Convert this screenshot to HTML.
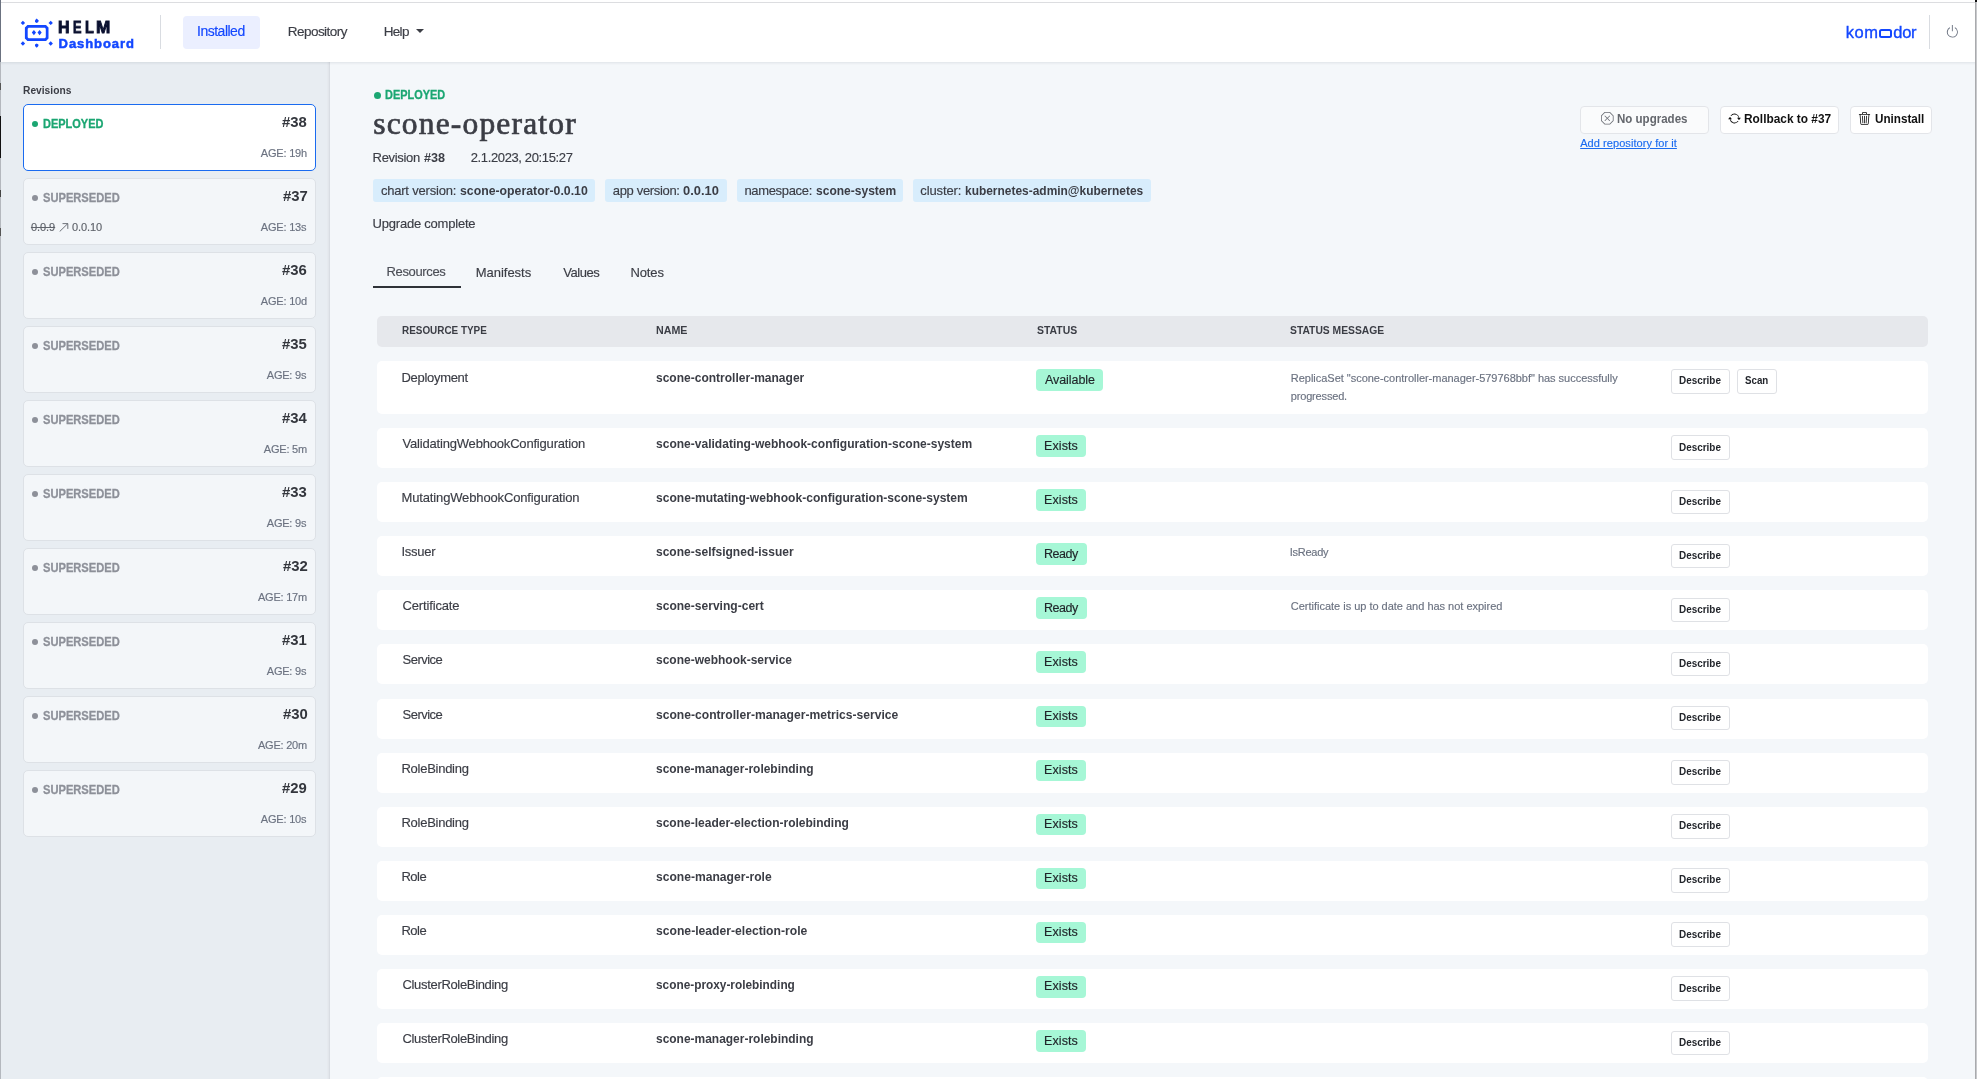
<!DOCTYPE html><html><head><meta charset="utf-8"><title>Helm Dashboard</title><style>*{box-sizing:border-box;margin:0;padding:0}
html,body{width:1977px;height:1079px;overflow:hidden}
body{font-family:"Liberation Sans",sans-serif;background:#f4f7fa;color:#3b3d45;position:relative}
.a{position:absolute}
.t{position:absolute;line-height:1;white-space:nowrap}
#root{position:absolute;left:0;top:0;width:1977px;height:1079px;will-change:transform}
.t{-webkit-text-stroke:0.15px currentColor}
</style></head><body><div id="root">
<div class="a" style="left:1px;top:62px;width:329px;height:1017px;background:#e8edf2"></div>
<div class="a" style="left:327px;top:62px;width:1px;height:1017px;background:#e6eaef"></div>
<div class="a" style="left:328px;top:62px;width:1px;height:1017px;background:#e2e6eb"></div>
<div class="a" style="left:329px;top:62px;width:1px;height:1017px;background:#d9dde3"></div>
<div class="a" style="left:0;top:0;width:1977px;height:62px;background:#fff;box-shadow:0 1px 2.5px rgba(30,40,60,0.10)"></div>
<div class="a" style="left:1px;top:2px;width:1976px;height:1px;background:#dcdde0"></div>
<svg class="a" style="left:18px;top:17px" width="36" height="32" viewBox="0 0 36 32">
<g fill="#1347ff">
<path d="M9.4 8.1 h18.6 l2.5 2.5 v10.8 l-2.5 2.5 h-18.6 l-2.5 -2.5 v-10.8 z M10.6 10.8 l-0.9 0.9 v8.6 l0.9 0.9 h16.3 l0.9 -0.9 v-8.6 l-0.9 -0.9 z" fill-rule="evenodd"/>
<path d="M15.9 12.9 l2.1 2.7 -2.1 2.7 -2.1 -2.7z"/>
<path d="M21.6 12.9 l2.1 2.7 -2.1 2.7 -2.1 -2.7z"/>
<path d="M18.7 1.6 l1.7 1.7 v1.6 l-1.7 1.1 -1.7 -1.1 v-1.6z"/>
<path d="M18.7 30.8 l1.7 -1.7 v-1.6 l-1.7 -1.1 -1.7 1.1 v1.6z"/>
<path d="M4.9 3.7 l2.2 2.2 -2.2 2.2 -2.2 -2.2z"/>
<path d="M32.7 3.7 l2.2 2.2 -2.2 2.2 -2.2 -2.2z"/>
<path d="M4.9 24.3 l2.2 2.2 -2.2 2.2 -2.2 -2.2z"/>
<path d="M32.7 24.3 l2.2 2.2 -2.2 2.2 -2.2 -2.2z"/>
</g></svg>
<div class="t" style="left:57.96px;top:19px;font-size:17px;color:#0b1130;font-weight:bold;transform:scaleX(0.9364);transform-origin:0 0;-webkit-text-stroke:0.9px #0b1130">H</div>
<div class="t" style="left:72.75px;top:19px;font-size:17px;color:#0b1130;font-weight:bold;transform:scaleX(0.7500);transform-origin:0 0;-webkit-text-stroke:0.9px #0b1130">E</div>
<div class="t" style="left:84.76px;top:19px;font-size:17px;color:#0b1130;font-weight:bold;transform:scaleX(0.8444);transform-origin:0 0;-webkit-text-stroke:0.9px #0b1130">L</div>
<div class="t" style="left:95.89px;top:19px;font-size:17px;color:#0b1130;font-weight:bold;transform:scaleX(1.0077);transform-origin:0 0;-webkit-text-stroke:0.9px #0b1130">M</div>
<div class="t" style="left:58.60px;top:37px;font-size:13px;color:#1347ff;font-weight:bold;letter-spacing:0.930px;-webkit-text-stroke:0.5px #1347ff">Dashboard</div>
<div class="a" style="left:160px;top:15px;width:1px;height:34px;background:#d9dce1"></div>
<div class="a" style="left:183px;top:16px;width:77px;height:33px;background:#ebefff;border-radius:4px"></div>
<div class="t" style="left:197.00px;top:24px;font-size:14px;color:#1347ff;letter-spacing:-0.495px">Installed</div>
<div class="t" style="left:287.70px;top:25px;font-size:13.5px;color:#3b3d45;letter-spacing:-0.520px">Repository</div>
<div class="t" style="left:383.80px;top:25px;font-size:13.5px;color:#3b3d45;letter-spacing:-0.719px">Help</div>
<svg class="a" style="left:416px;top:29px" width="8" height="4" viewBox="0 0 8 4"><path d="M0 0h8L4 4z" fill="#3b3d45"/></svg>
<div class="t" style="left:1845.80px;top:24px;font-size:16.5px;color:#1347ff;letter-spacing:0.487px;-webkit-text-stroke:0.35px #1347ff">kom</div>
<div class="a" style="left:1879.3px;top:29.3px;width:12.6px;height:9.1px;border:2px solid #1347ff;border-radius:2.5px"></div>
<div class="t" style="left:1893.30px;top:24px;font-size:16.5px;color:#1347ff;letter-spacing:-0.277px;-webkit-text-stroke:0.35px #1347ff">dor</div>
<div class="a" style="left:1929px;top:15px;width:1px;height:34px;background:#d9dce1"></div>
<svg class="a" style="left:1945.2px;top:24px" width="14.7" height="14.7" viewBox="0 0 16 16" fill="#6b7280"><path d="M7.5 1v7h1V1h-1z"/><path d="M3 8.812a4.999 4.999 0 0 1 2.578-4.375l-.485-.874A6 6 0 1 0 11 3.616l-.501.865A5 5 0 1 1 3 8.812z"/></svg>
<div class="t" style="left:22.80px;top:85px;font-size:11px;color:#3b3d45;font-weight:bold;-webkit-text-stroke-width:0;transform:scaleX(0.9300);transform-origin:0 0">Revisions</div>
<div class="a" style="left:23px;top:104px;width:293px;height:67px;background:#fff;border:1.5px solid #1a6bf0;border-radius:5px"></div>
<div class="a" style="left:32px;top:120.5px;width:6.4px;height:6.4px;border-radius:50%;background:#1ba672"></div>
<div class="t" style="left:42.80px;top:118px;font-size:12px;color:#1ba672;font-weight:bold;transform:scaleX(0.9149);transform-origin:0 0;-webkit-text-stroke:0.3px #1ba672">DEPLOYED</div>
<div class="t" style="left:281.81px;top:114px;font-size:15.5px;color:#33363d;font-weight:bold;-webkit-text-stroke-width:0;transform:scaleX(0.9600);transform-origin:0 0">#38</div>
<div class="t" style="left:260.85px;top:148px;font-size:11px;color:#6b7280;letter-spacing:-0.204px">AGE: 19h</div>
<div class="a" style="left:23px;top:178px;width:293px;height:67px;background:#f3f6f9;border:1px solid #dde1e6;border-radius:5px"></div>
<div class="a" style="left:32px;top:194.5px;width:6.4px;height:6.4px;border-radius:50%;background:#8d9099"></div>
<div class="t" style="left:42.80px;top:192px;font-size:12px;color:#8d9099;font-weight:bold;transform:scaleX(0.9275);transform-origin:0 0;-webkit-text-stroke:0.3px #8d9099">SUPERSEDED</div>
<div class="t" style="left:282.77px;top:188px;font-size:15.5px;color:#33363d;font-weight:bold;-webkit-text-stroke-width:0;transform:scaleX(0.9600);transform-origin:0 0">#37</div>
<div class="t" style="left:260.85px;top:222px;font-size:11px;color:#6b7280;letter-spacing:-0.204px">AGE: 13s</div>
<div class="t" style="left:30.90px;top:222px;font-size:11px;color:#5f636b;letter-spacing:-0.037px;text-decoration:line-through">0.0.9</div>
<svg class="a" style="left:58.5px;top:223px" width="10" height="9" viewBox="0 0 10 9"><path d="M0.7 8.5L8.8 0.6M3.5 0.6h5.3v5.3" fill="none" stroke="#5f636b" stroke-width="0.9"/></svg>
<div class="t" style="left:71.90px;top:222px;font-size:11px;color:#5f636b;letter-spacing:-0.073px">0.0.10</div>
<div class="a" style="left:23px;top:252px;width:293px;height:67px;background:#f3f6f9;border:1px solid #dde1e6;border-radius:5px"></div>
<div class="a" style="left:32px;top:268.5px;width:6.4px;height:6.4px;border-radius:50%;background:#8d9099"></div>
<div class="t" style="left:42.80px;top:266px;font-size:12px;color:#8d9099;font-weight:bold;transform:scaleX(0.9275);transform-origin:0 0;-webkit-text-stroke:0.3px #8d9099">SUPERSEDED</div>
<div class="t" style="left:281.81px;top:262px;font-size:15.5px;color:#33363d;font-weight:bold;-webkit-text-stroke-width:0;transform:scaleX(0.9600);transform-origin:0 0">#36</div>
<div class="t" style="left:260.85px;top:296px;font-size:11px;color:#6b7280;letter-spacing:-0.204px">AGE: 10d</div>
<div class="a" style="left:23px;top:326px;width:293px;height:67px;background:#f3f6f9;border:1px solid #dde1e6;border-radius:5px"></div>
<div class="a" style="left:32px;top:342.5px;width:6.4px;height:6.4px;border-radius:50%;background:#8d9099"></div>
<div class="t" style="left:42.80px;top:340px;font-size:12px;color:#8d9099;font-weight:bold;transform:scaleX(0.9275);transform-origin:0 0;-webkit-text-stroke:0.3px #8d9099">SUPERSEDED</div>
<div class="t" style="left:281.81px;top:336px;font-size:15.5px;color:#33363d;font-weight:bold;-webkit-text-stroke-width:0;transform:scaleX(0.9600);transform-origin:0 0">#35</div>
<div class="t" style="left:266.78px;top:370px;font-size:11px;color:#6b7280;letter-spacing:-0.207px">AGE: 9s</div>
<div class="a" style="left:23px;top:400px;width:293px;height:67px;background:#f3f6f9;border:1px solid #dde1e6;border-radius:5px"></div>
<div class="a" style="left:32px;top:416.5px;width:6.4px;height:6.4px;border-radius:50%;background:#8d9099"></div>
<div class="t" style="left:42.80px;top:414px;font-size:12px;color:#8d9099;font-weight:bold;transform:scaleX(0.9275);transform-origin:0 0;-webkit-text-stroke:0.3px #8d9099">SUPERSEDED</div>
<div class="t" style="left:281.81px;top:410px;font-size:15.5px;color:#33363d;font-weight:bold;-webkit-text-stroke-width:0;transform:scaleX(0.9600);transform-origin:0 0">#34</div>
<div class="t" style="left:263.87px;top:444px;font-size:11px;color:#6b7280;letter-spacing:-0.222px">AGE: 5m</div>
<div class="a" style="left:23px;top:474px;width:293px;height:67px;background:#f3f6f9;border:1px solid #dde1e6;border-radius:5px"></div>
<div class="a" style="left:32px;top:490.5px;width:6.4px;height:6.4px;border-radius:50%;background:#8d9099"></div>
<div class="t" style="left:42.80px;top:488px;font-size:12px;color:#8d9099;font-weight:bold;transform:scaleX(0.9275);transform-origin:0 0;-webkit-text-stroke:0.3px #8d9099">SUPERSEDED</div>
<div class="t" style="left:281.81px;top:484px;font-size:15.5px;color:#33363d;font-weight:bold;-webkit-text-stroke-width:0;transform:scaleX(0.9600);transform-origin:0 0">#33</div>
<div class="t" style="left:266.78px;top:518px;font-size:11px;color:#6b7280;letter-spacing:-0.207px">AGE: 9s</div>
<div class="a" style="left:23px;top:548px;width:293px;height:67px;background:#f3f6f9;border:1px solid #dde1e6;border-radius:5px"></div>
<div class="a" style="left:32px;top:564.5px;width:6.4px;height:6.4px;border-radius:50%;background:#8d9099"></div>
<div class="t" style="left:42.80px;top:562px;font-size:12px;color:#8d9099;font-weight:bold;transform:scaleX(0.9275);transform-origin:0 0;-webkit-text-stroke:0.3px #8d9099">SUPERSEDED</div>
<div class="t" style="left:282.77px;top:558px;font-size:15.5px;color:#33363d;font-weight:bold;-webkit-text-stroke-width:0;transform:scaleX(0.9600);transform-origin:0 0">#32</div>
<div class="t" style="left:257.94px;top:592px;font-size:11px;color:#6b7280;letter-spacing:-0.217px">AGE: 17m</div>
<div class="a" style="left:23px;top:622px;width:293px;height:67px;background:#f3f6f9;border:1px solid #dde1e6;border-radius:5px"></div>
<div class="a" style="left:32px;top:638.5px;width:6.4px;height:6.4px;border-radius:50%;background:#8d9099"></div>
<div class="t" style="left:42.80px;top:636px;font-size:12px;color:#8d9099;font-weight:bold;transform:scaleX(0.9275);transform-origin:0 0;-webkit-text-stroke:0.3px #8d9099">SUPERSEDED</div>
<div class="t" style="left:281.81px;top:632px;font-size:15.5px;color:#33363d;font-weight:bold;-webkit-text-stroke-width:0;transform:scaleX(0.9600);transform-origin:0 0">#31</div>
<div class="t" style="left:266.78px;top:666px;font-size:11px;color:#6b7280;letter-spacing:-0.207px">AGE: 9s</div>
<div class="a" style="left:23px;top:696px;width:293px;height:67px;background:#f3f6f9;border:1px solid #dde1e6;border-radius:5px"></div>
<div class="a" style="left:32px;top:712.5px;width:6.4px;height:6.4px;border-radius:50%;background:#8d9099"></div>
<div class="t" style="left:42.80px;top:710px;font-size:12px;color:#8d9099;font-weight:bold;transform:scaleX(0.9275);transform-origin:0 0;-webkit-text-stroke:0.3px #8d9099">SUPERSEDED</div>
<div class="t" style="left:282.77px;top:706px;font-size:15.5px;color:#33363d;font-weight:bold;-webkit-text-stroke-width:0;transform:scaleX(0.9600);transform-origin:0 0">#30</div>
<div class="t" style="left:257.94px;top:740px;font-size:11px;color:#6b7280;letter-spacing:-0.217px">AGE: 20m</div>
<div class="a" style="left:23px;top:770px;width:293px;height:67px;background:#f3f6f9;border:1px solid #dde1e6;border-radius:5px"></div>
<div class="a" style="left:32px;top:786.5px;width:6.4px;height:6.4px;border-radius:50%;background:#8d9099"></div>
<div class="t" style="left:42.80px;top:784px;font-size:12px;color:#8d9099;font-weight:bold;transform:scaleX(0.9275);transform-origin:0 0;-webkit-text-stroke:0.3px #8d9099">SUPERSEDED</div>
<div class="t" style="left:281.81px;top:780px;font-size:15.5px;color:#33363d;font-weight:bold;-webkit-text-stroke-width:0;transform:scaleX(0.9600);transform-origin:0 0">#29</div>
<div class="t" style="left:260.85px;top:814px;font-size:11px;color:#6b7280;letter-spacing:-0.204px">AGE: 10s</div>
<div class="a" style="left:374.2px;top:91.5px;width:7px;height:7px;border-radius:50%;background:#1ba672"></div>
<div class="t" style="left:385.40px;top:89px;font-size:12px;color:#1ba672;font-weight:bold;transform:scaleX(0.9104);transform-origin:0 0;-webkit-text-stroke:0.3px #1ba672">DEPLOYED</div>
<div class="t" style="left:373.20px;top:108px;font-size:31.5px;color:#3b3d45;font-family:'Liberation Serif',serif;letter-spacing:1.180px;-webkit-text-stroke:0.7px #3b3d45">scone-operator</div>
<div class="t" style="left:372.60px;top:151px;font-size:13px;color:#3b3d45;letter-spacing:-0.318px">Revision</div>
<div class="t" style="left:424.20px;top:151px;font-size:13px;color:#3b3d45;font-weight:bold;-webkit-text-stroke-width:0;transform:scaleX(0.9692);transform-origin:0 0">#38</div>
<div class="t" style="left:470.70px;top:151px;font-size:13px;color:#3b3d45;letter-spacing:-0.365px">2.1.2023, 20:15:27</div>
<div class="a" style="left:373px;top:179px;width:222.0px;height:23px;background:#d8edfc;border-radius:3px"></div>
<div class="t" style="left:380.90px;top:184px;font-size:13px;color:#3b3d45;letter-spacing:-0.202px">chart version:</div>
<div class="t" style="left:459.60px;top:184px;font-size:13px;color:#3b3d45;font-weight:bold;-webkit-text-stroke-width:0;transform:scaleX(0.9453);transform-origin:0 0">scone-operator-0.0.10</div>
<div class="a" style="left:605.2px;top:179px;width:121.5px;height:23px;background:#d8edfc;border-radius:3px"></div>
<div class="t" style="left:612.80px;top:184px;font-size:13px;color:#3b3d45;letter-spacing:-0.337px">app version:</div>
<div class="t" style="left:683.20px;top:184px;font-size:13px;color:#3b3d45;font-weight:bold;-webkit-text-stroke-width:0;transform:scaleX(0.9913);transform-origin:0 0">0.0.10</div>
<div class="a" style="left:737.1px;top:179px;width:165.7px;height:23px;background:#d8edfc;border-radius:3px"></div>
<div class="t" style="left:744.40px;top:184px;font-size:13px;color:#3b3d45;letter-spacing:-0.323px">namespace:</div>
<div class="t" style="left:815.60px;top:184px;font-size:13px;color:#3b3d45;font-weight:bold;-webkit-text-stroke-width:0;transform:scaleX(0.9251);transform-origin:0 0">scone-system</div>
<div class="a" style="left:913px;top:179px;width:237.9px;height:23px;background:#d8edfc;border-radius:3px"></div>
<div class="t" style="left:920.30px;top:184px;font-size:13px;color:#3b3d45;letter-spacing:-0.113px">cluster:</div>
<div class="t" style="left:964.70px;top:184px;font-size:13px;color:#3b3d45;font-weight:bold;-webkit-text-stroke-width:0;transform:scaleX(0.9186);transform-origin:0 0">kubernetes-admin@kubernetes</div>
<div class="t" style="left:372.60px;top:217px;font-size:13px;color:#3b3d45;letter-spacing:-0.220px">Upgrade complete</div>
<div class="t" style="left:386.60px;top:265px;font-size:13px;color:#4b4e56;letter-spacing:-0.367px">Resources</div>
<div class="a" style="left:373px;top:286px;width:88px;height:2px;background:#2f3238"></div>
<div class="t" style="left:475.70px;top:266px;font-size:13px;color:#3b3d45;letter-spacing:-0.016px">Manifests</div>
<div class="t" style="left:563.20px;top:266px;font-size:13px;color:#3b3d45;letter-spacing:-0.437px">Values</div>
<div class="t" style="left:630.40px;top:266px;font-size:13px;color:#3b3d45;letter-spacing:-0.090px">Notes</div>
<div class="a" style="left:1580px;top:106px;width:129px;height:27.5px;background:#fafbfc;border:1px solid #e3e5e9;border-radius:4px"></div>
<svg class="a" style="left:1601.1px;top:112.3px" width="12.6" height="12.6" viewBox="0 0 16 16" fill="#6b6e75"><path d="M4.54.146A.5.5 0 0 1 4.893 0h6.214a.5.5 0 0 1 .353.146l4.394 4.394a.5.5 0 0 1 .146.353v6.214a.5.5 0 0 1-.146.353l-4.394 4.394a.5.5 0 0 1-.353.146H4.893a.5.5 0 0 1-.353-.146L.146 11.46A.5.5 0 0 1 0 11.107V4.893a.5.5 0 0 1 .146-.353L4.54.146zM5.1 1 1 5.1v5.8L5.1 15h5.8l4.1-4.1V5.1L10.9 1H5.1z"/><path d="M4.646 4.646a.5.5 0 0 1 .708 0L8 7.293l2.646-2.647a.5.5 0 0 1 .708.708L8.707 8l2.647 2.646a.5.5 0 0 1-.708.708L8 8.707l-2.646 2.647a.5.5 0 0 1-.708-.708L7.293 8 4.646 5.354a.5.5 0 0 1 0-.708z"/></svg>
<div class="t" style="left:1617.30px;top:113px;font-size:12px;color:#64676d;font-weight:bold;-webkit-text-stroke-width:0;transform:scaleX(0.9611);transform-origin:0 0">No upgrades</div>
<div class="t" style="left:1580.20px;top:138px;font-size:11px;color:#1a6bf0;letter-spacing:0.064px;text-decoration:underline">Add repository for it</div>
<div class="a" style="left:1720px;top:106px;width:119px;height:27.5px;background:#fff;border:1px solid #e3e5e9;border-radius:4px"></div>
<svg class="a" style="left:1727.5px;top:112.3px" width="13" height="13" viewBox="0 0 16 16" fill="#111"><path d="M11.534 7h3.932a.25.25 0 0 1 .192.41l-1.966 2.36a.25.25 0 0 1-.384 0l-1.966-2.36a.25.25 0 0 1 .192-.41zm-11 2h3.932a.25.25 0 0 0 .192-.41L2.692 6.23a.25.25 0 0 0-.384 0L.342 8.59A.25.25 0 0 0 .534 9z"/><path fill-rule="evenodd" d="M8 3c-1.552 0-2.94.707-3.857 1.818a.5.5 0 1 1-.771-.636A6.002 6.002 0 0 1 13.917 7H12.9A5.002 5.002 0 0 0 8 3zM3.1 9a5.002 5.002 0 0 0 8.757 2.182.5.5 0 1 1 .771.636A6.002 6.002 0 0 1 2.083 9H3.1z"/></svg>
<div class="t" style="left:1744.30px;top:113px;font-size:12.5px;color:#111;font-weight:bold;-webkit-text-stroke-width:0;transform:scaleX(0.9504);transform-origin:0 0">Rollback to #37</div>
<div class="a" style="left:1850px;top:106px;width:82px;height:27.5px;background:#fff;border:1px solid #e3e5e9;border-radius:4px"></div>
<svg class="a" style="left:1858px;top:112px" width="13" height="13" viewBox="0 0 16 16" fill="#111"><path d="M6.5 1h3a.5.5 0 0 1 .5.5v1H6v-1a.5.5 0 0 1 .5-.5ZM11 2.5v-1A1.5 1.5 0 0 0 9.5 0h-3A1.5 1.5 0 0 0 5 1.5v1H1.5a.5.5 0 0 0 0 1h.538l.853 10.66A2 2 0 0 0 4.885 16h6.23a2 2 0 0 0 1.994-1.84l.853-10.66h.538a.5.5 0 0 0 0-1H11Zm1.958 1-.846 10.58a1 1 0 0 1-.997.92h-6.23a1 1 0 0 1-.997-.92L3.042 3.5h9.916Zm-7.487 1a.5.5 0 0 1 .528.47l.5 8.5a.5.5 0 0 1-.998.06L5 5.03a.5.5 0 0 1 .47-.53Zm5.058 0a.5.5 0 0 1 .47.53l-.5 8.5a.5.5 0 1 1-.998-.06l.5-8.5a.5.5 0 0 1 .528-.47ZM8 4.5a.5.5 0 0 1 .5.5v8.5a.5.5 0 0 1-1 0V5a.5.5 0 0 1 .5-.5Z"/></svg>
<div class="t" style="left:1874.50px;top:113px;font-size:12.5px;color:#111;font-weight:bold;-webkit-text-stroke-width:0;transform:scaleX(0.9348);transform-origin:0 0">Uninstall</div>
<div class="a" style="left:377px;top:316px;width:1551px;height:31px;background:#e6e8ec;border-radius:5px"></div>
<div class="t" style="left:402.30px;top:325px;font-size:11px;color:#3b3d45;font-weight:bold;-webkit-text-stroke-width:0;transform:scaleX(0.9009);transform-origin:0 0">RESOURCE TYPE</div>
<div class="t" style="left:656.00px;top:325px;font-size:11px;color:#3b3d45;font-weight:bold;-webkit-text-stroke-width:0;transform:scaleX(0.9703);transform-origin:0 0">NAME</div>
<div class="t" style="left:1036.50px;top:325px;font-size:11px;color:#3b3d45;font-weight:bold;-webkit-text-stroke-width:0;transform:scaleX(0.9493);transform-origin:0 0">STATUS</div>
<div class="t" style="left:1290.00px;top:325px;font-size:11px;color:#3b3d45;font-weight:bold;-webkit-text-stroke-width:0;transform:scaleX(0.9381);transform-origin:0 0">STATUS MESSAGE</div>
<div class="a" style="left:377px;top:361.00px;width:1551px;height:53px;background:#fff;border-radius:5px"></div>
<div class="t" style="left:401.50px;top:371px;font-size:13px;color:#3b3d45;letter-spacing:-0.306px">Deployment</div>
<div class="t" style="left:655.80px;top:371px;font-size:13px;color:#3b3d45;font-weight:bold;-webkit-text-stroke-width:0;transform:scaleX(0.9244);transform-origin:0 0">scone-controller-manager</div>
<div class="a" style="left:1036px;top:369.00px;width:67px;height:21.5px;background:#a6f7d6;border-radius:4px"></div>
<div class="t" style="left:1045.00px;top:374px;font-size:12.5px;color:#1f2328;letter-spacing:-0.069px">Available</div>
<div class="t" style="left:1290.80px;top:373px;font-size:11px;color:#6b7280;letter-spacing:-0.021px">ReplicaSet &quot;scone-controller-manager-579768bbf&quot; has successfully</div>
<div class="t" style="left:1290.80px;top:391px;font-size:11px;color:#6b7280;letter-spacing:-0.173px">progressed.</div>
<div class="a" style="left:1671px;top:369.20px;width:58.5px;height:24.5px;background:#fff;border:1px solid #dfe1e5;border-radius:3px"></div>
<div class="t" style="left:1679.40px;top:375px;font-size:11px;color:#22252b;font-weight:bold;-webkit-text-stroke-width:0;transform:scaleX(0.9018);transform-origin:0 0">Describe</div>
<div class="a" style="left:1737px;top:369.20px;width:39.5px;height:24.5px;background:#fff;border:1px solid #dfe1e5;border-radius:3px"></div>
<div class="t" style="left:1745.10px;top:375px;font-size:11px;color:#22252b;font-weight:bold;-webkit-text-stroke-width:0;transform:scaleX(0.8844);transform-origin:0 0">Scan</div>
<div class="a" style="left:377px;top:428.00px;width:1551px;height:40px;background:#fff;border-radius:5px"></div>
<div class="t" style="left:402.50px;top:437px;font-size:13px;color:#3b3d45;letter-spacing:-0.187px">ValidatingWebhookConfiguration</div>
<div class="t" style="left:655.80px;top:437px;font-size:13px;color:#3b3d45;font-weight:bold;-webkit-text-stroke-width:0;transform:scaleX(0.9255);transform-origin:0 0">scone-validating-webhook-configuration-scone-system</div>
<div class="a" style="left:1036px;top:435.00px;width:50px;height:21.5px;background:#a6f7d6;border-radius:4px"></div>
<div class="t" style="left:1044.00px;top:440px;font-size:12.5px;color:#1f2328;letter-spacing:0.103px">Exists</div>
<div class="a" style="left:1671px;top:435.40px;width:58.5px;height:24.5px;background:#fff;border:1px solid #dfe1e5;border-radius:3px"></div>
<div class="t" style="left:1679.40px;top:442px;font-size:11px;color:#22252b;font-weight:bold;-webkit-text-stroke-width:0;transform:scaleX(0.9018);transform-origin:0 0">Describe</div>
<div class="a" style="left:377px;top:482.10px;width:1551px;height:40px;background:#fff;border-radius:5px"></div>
<div class="t" style="left:401.50px;top:491px;font-size:13px;color:#3b3d45;letter-spacing:-0.142px">MutatingWebhookConfiguration</div>
<div class="t" style="left:655.80px;top:491px;font-size:13px;color:#3b3d45;font-weight:bold;-webkit-text-stroke-width:0;transform:scaleX(0.9284);transform-origin:0 0">scone-mutating-webhook-configuration-scone-system</div>
<div class="a" style="left:1036px;top:489.10px;width:50px;height:21.5px;background:#a6f7d6;border-radius:4px"></div>
<div class="t" style="left:1044.00px;top:494px;font-size:12.5px;color:#1f2328;letter-spacing:0.103px">Exists</div>
<div class="a" style="left:1671px;top:489.50px;width:58.5px;height:24.5px;background:#fff;border:1px solid #dfe1e5;border-radius:3px"></div>
<div class="t" style="left:1679.40px;top:496px;font-size:11px;color:#22252b;font-weight:bold;-webkit-text-stroke-width:0;transform:scaleX(0.9018);transform-origin:0 0">Describe</div>
<div class="a" style="left:377px;top:536.20px;width:1551px;height:40px;background:#fff;border-radius:5px"></div>
<div class="t" style="left:401.50px;top:545px;font-size:13px;color:#3b3d45;letter-spacing:-0.254px">Issuer</div>
<div class="t" style="left:655.80px;top:545px;font-size:13px;color:#3b3d45;font-weight:bold;-webkit-text-stroke-width:0;transform:scaleX(0.9249);transform-origin:0 0">scone-selfsigned-issuer</div>
<div class="a" style="left:1036px;top:543.20px;width:51px;height:21.5px;background:#a6f7d6;border-radius:4px"></div>
<div class="t" style="left:1044.00px;top:548px;font-size:12.5px;color:#1f2328;letter-spacing:-0.496px">Ready</div>
<div class="t" style="left:1289.80px;top:547px;font-size:11px;color:#6b7280;letter-spacing:-0.276px">IsReady</div>
<div class="a" style="left:1671px;top:543.60px;width:58.5px;height:24.5px;background:#fff;border:1px solid #dfe1e5;border-radius:3px"></div>
<div class="t" style="left:1679.40px;top:550px;font-size:11px;color:#22252b;font-weight:bold;-webkit-text-stroke-width:0;transform:scaleX(0.9018);transform-origin:0 0">Describe</div>
<div class="a" style="left:377px;top:590.30px;width:1551px;height:40px;background:#fff;border-radius:5px"></div>
<div class="t" style="left:402.50px;top:599px;font-size:13px;color:#3b3d45;letter-spacing:-0.149px">Certificate</div>
<div class="t" style="left:655.80px;top:599px;font-size:13px;color:#3b3d45;font-weight:bold;-webkit-text-stroke-width:0;transform:scaleX(0.9266);transform-origin:0 0">scone-serving-cert</div>
<div class="a" style="left:1036px;top:597.30px;width:51px;height:21.5px;background:#a6f7d6;border-radius:4px"></div>
<div class="t" style="left:1044.00px;top:602px;font-size:12.5px;color:#1f2328;letter-spacing:-0.496px">Ready</div>
<div class="t" style="left:1290.80px;top:601px;font-size:11px;color:#6b7280;letter-spacing:-0.013px">Certificate is up to date and has not expired</div>
<div class="a" style="left:1671px;top:597.70px;width:58.5px;height:24.5px;background:#fff;border:1px solid #dfe1e5;border-radius:3px"></div>
<div class="t" style="left:1679.40px;top:604px;font-size:11px;color:#22252b;font-weight:bold;-webkit-text-stroke-width:0;transform:scaleX(0.9018);transform-origin:0 0">Describe</div>
<div class="a" style="left:377px;top:644.40px;width:1551px;height:40px;background:#fff;border-radius:5px"></div>
<div class="t" style="left:402.50px;top:653px;font-size:13px;color:#3b3d45;letter-spacing:-0.503px">Service</div>
<div class="t" style="left:655.80px;top:653px;font-size:13px;color:#3b3d45;font-weight:bold;-webkit-text-stroke-width:0;transform:scaleX(0.9228);transform-origin:0 0">scone-webhook-service</div>
<div class="a" style="left:1036px;top:651.40px;width:50px;height:21.5px;background:#a6f7d6;border-radius:4px"></div>
<div class="t" style="left:1044.00px;top:656px;font-size:12.5px;color:#1f2328;letter-spacing:0.103px">Exists</div>
<div class="a" style="left:1671px;top:651.80px;width:58.5px;height:24.5px;background:#fff;border:1px solid #dfe1e5;border-radius:3px"></div>
<div class="t" style="left:1679.40px;top:658px;font-size:11px;color:#22252b;font-weight:bold;-webkit-text-stroke-width:0;transform:scaleX(0.9018);transform-origin:0 0">Describe</div>
<div class="a" style="left:377px;top:698.50px;width:1551px;height:40px;background:#fff;border-radius:5px"></div>
<div class="t" style="left:402.50px;top:708px;font-size:13px;color:#3b3d45;letter-spacing:-0.503px">Service</div>
<div class="t" style="left:655.80px;top:708px;font-size:13px;color:#3b3d45;font-weight:bold;-webkit-text-stroke-width:0;transform:scaleX(0.9316);transform-origin:0 0">scone-controller-manager-metrics-service</div>
<div class="a" style="left:1036px;top:705.50px;width:50px;height:21.5px;background:#a6f7d6;border-radius:4px"></div>
<div class="t" style="left:1044.00px;top:710px;font-size:12.5px;color:#1f2328;letter-spacing:0.103px">Exists</div>
<div class="a" style="left:1671px;top:705.90px;width:58.5px;height:24.5px;background:#fff;border:1px solid #dfe1e5;border-radius:3px"></div>
<div class="t" style="left:1679.40px;top:712px;font-size:11px;color:#22252b;font-weight:bold;-webkit-text-stroke-width:0;transform:scaleX(0.9018);transform-origin:0 0">Describe</div>
<div class="a" style="left:377px;top:752.60px;width:1551px;height:40px;background:#fff;border-radius:5px"></div>
<div class="t" style="left:401.50px;top:762px;font-size:13px;color:#3b3d45;letter-spacing:-0.267px">RoleBinding</div>
<div class="t" style="left:655.80px;top:762px;font-size:13px;color:#3b3d45;font-weight:bold;-webkit-text-stroke-width:0;transform:scaleX(0.9203);transform-origin:0 0">scone-manager-rolebinding</div>
<div class="a" style="left:1036px;top:759.60px;width:50px;height:21.5px;background:#a6f7d6;border-radius:4px"></div>
<div class="t" style="left:1044.00px;top:764px;font-size:12.5px;color:#1f2328;letter-spacing:0.103px">Exists</div>
<div class="a" style="left:1671px;top:760.00px;width:58.5px;height:24.5px;background:#fff;border:1px solid #dfe1e5;border-radius:3px"></div>
<div class="t" style="left:1679.40px;top:766px;font-size:11px;color:#22252b;font-weight:bold;-webkit-text-stroke-width:0;transform:scaleX(0.9018);transform-origin:0 0">Describe</div>
<div class="a" style="left:377px;top:806.70px;width:1551px;height:40px;background:#fff;border-radius:5px"></div>
<div class="t" style="left:401.50px;top:816px;font-size:13px;color:#3b3d45;letter-spacing:-0.267px">RoleBinding</div>
<div class="t" style="left:655.80px;top:816px;font-size:13px;color:#3b3d45;font-weight:bold;-webkit-text-stroke-width:0;transform:scaleX(0.9238);transform-origin:0 0">scone-leader-election-rolebinding</div>
<div class="a" style="left:1036px;top:813.70px;width:50px;height:21.5px;background:#a6f7d6;border-radius:4px"></div>
<div class="t" style="left:1044.00px;top:818px;font-size:12.5px;color:#1f2328;letter-spacing:0.103px">Exists</div>
<div class="a" style="left:1671px;top:814.10px;width:58.5px;height:24.5px;background:#fff;border:1px solid #dfe1e5;border-radius:3px"></div>
<div class="t" style="left:1679.40px;top:820px;font-size:11px;color:#22252b;font-weight:bold;-webkit-text-stroke-width:0;transform:scaleX(0.9018);transform-origin:0 0">Describe</div>
<div class="a" style="left:377px;top:860.80px;width:1551px;height:40px;background:#fff;border-radius:5px"></div>
<div class="t" style="left:401.50px;top:870px;font-size:13px;color:#3b3d45;letter-spacing:-0.535px">Role</div>
<div class="t" style="left:655.80px;top:870px;font-size:13px;color:#3b3d45;font-weight:bold;-webkit-text-stroke-width:0;transform:scaleX(0.9304);transform-origin:0 0">scone-manager-role</div>
<div class="a" style="left:1036px;top:867.80px;width:50px;height:21.5px;background:#a6f7d6;border-radius:4px"></div>
<div class="t" style="left:1044.00px;top:872px;font-size:12.5px;color:#1f2328;letter-spacing:0.103px">Exists</div>
<div class="a" style="left:1671px;top:868.20px;width:58.5px;height:24.5px;background:#fff;border:1px solid #dfe1e5;border-radius:3px"></div>
<div class="t" style="left:1679.40px;top:874px;font-size:11px;color:#22252b;font-weight:bold;-webkit-text-stroke-width:0;transform:scaleX(0.9018);transform-origin:0 0">Describe</div>
<div class="a" style="left:377px;top:914.90px;width:1551px;height:40px;background:#fff;border-radius:5px"></div>
<div class="t" style="left:401.50px;top:924px;font-size:13px;color:#3b3d45;letter-spacing:-0.535px">Role</div>
<div class="t" style="left:655.80px;top:924px;font-size:13px;color:#3b3d45;font-weight:bold;-webkit-text-stroke-width:0;transform:scaleX(0.9350);transform-origin:0 0">scone-leader-election-role</div>
<div class="a" style="left:1036px;top:921.90px;width:50px;height:21.5px;background:#a6f7d6;border-radius:4px"></div>
<div class="t" style="left:1044.00px;top:926px;font-size:12.5px;color:#1f2328;letter-spacing:0.103px">Exists</div>
<div class="a" style="left:1671px;top:922.30px;width:58.5px;height:24.5px;background:#fff;border:1px solid #dfe1e5;border-radius:3px"></div>
<div class="t" style="left:1679.40px;top:929px;font-size:11px;color:#22252b;font-weight:bold;-webkit-text-stroke-width:0;transform:scaleX(0.9018);transform-origin:0 0">Describe</div>
<div class="a" style="left:377px;top:969.00px;width:1551px;height:40px;background:#fff;border-radius:5px"></div>
<div class="t" style="left:402.50px;top:978px;font-size:13px;color:#3b3d45;letter-spacing:-0.327px">ClusterRoleBinding</div>
<div class="t" style="left:655.80px;top:978px;font-size:13px;color:#3b3d45;font-weight:bold;-webkit-text-stroke-width:0;transform:scaleX(0.9111);transform-origin:0 0">scone-proxy-rolebinding</div>
<div class="a" style="left:1036px;top:976.00px;width:50px;height:21.5px;background:#a6f7d6;border-radius:4px"></div>
<div class="t" style="left:1044.00px;top:980px;font-size:12.5px;color:#1f2328;letter-spacing:0.103px">Exists</div>
<div class="a" style="left:1671px;top:976.40px;width:58.5px;height:24.5px;background:#fff;border:1px solid #dfe1e5;border-radius:3px"></div>
<div class="t" style="left:1679.40px;top:983px;font-size:11px;color:#22252b;font-weight:bold;-webkit-text-stroke-width:0;transform:scaleX(0.9018);transform-origin:0 0">Describe</div>
<div class="a" style="left:377px;top:1023.10px;width:1551px;height:40px;background:#fff;border-radius:5px"></div>
<div class="t" style="left:402.50px;top:1032px;font-size:13px;color:#3b3d45;letter-spacing:-0.327px">ClusterRoleBinding</div>
<div class="t" style="left:655.80px;top:1032px;font-size:13px;color:#3b3d45;font-weight:bold;-webkit-text-stroke-width:0;transform:scaleX(0.9203);transform-origin:0 0">scone-manager-rolebinding</div>
<div class="a" style="left:1036px;top:1030.10px;width:50px;height:21.5px;background:#a6f7d6;border-radius:4px"></div>
<div class="t" style="left:1044.00px;top:1035px;font-size:12.5px;color:#1f2328;letter-spacing:0.103px">Exists</div>
<div class="a" style="left:1671px;top:1030.50px;width:58.5px;height:24.5px;background:#fff;border:1px solid #dfe1e5;border-radius:3px"></div>
<div class="t" style="left:1679.40px;top:1037px;font-size:11px;color:#22252b;font-weight:bold;-webkit-text-stroke-width:0;transform:scaleX(0.9018);transform-origin:0 0">Describe</div>
<div class="a" style="left:377px;top:1077.20px;width:1551px;height:40px;background:#fff;border-radius:5px"></div>
<div class="t" style="left:402.50px;top:1086px;font-size:13px;color:#3b3d45;letter-spacing:-0.568px">ClusterRole</div>
<div class="t" style="left:655.80px;top:1086px;font-size:13px;color:#3b3d45;font-weight:bold;-webkit-text-stroke-width:0;transform:scaleX(0.9304);transform-origin:0 0">scone-manager-role</div>
<div class="a" style="left:1036px;top:1084.20px;width:50px;height:21.5px;background:#a6f7d6;border-radius:4px"></div>
<div class="t" style="left:1044.00px;top:1089px;font-size:12.5px;color:#1f2328;letter-spacing:0.103px">Exists</div>
<div class="a" style="left:1671px;top:1084.60px;width:58.5px;height:24.5px;background:#fff;border:1px solid #dfe1e5;border-radius:3px"></div>
<div class="t" style="left:1679.40px;top:1091px;font-size:11px;color:#22252b;font-weight:bold;-webkit-text-stroke-width:0;transform:scaleX(0.9018);transform-origin:0 0">Describe</div>
<div class="a" style="left:0;top:0;width:1px;height:62px;background:#6b7280"></div>
<div class="a" style="left:0;top:62px;width:1px;height:1017px;background:#b4b8be"></div>
<div class="a" style="left:0;top:116px;width:1px;height:42px;background:#111"></div>
<div class="a" style="left:0;top:83px;width:1px;height:7px;background:#555"></div>
<div class="a" style="left:0;top:190px;width:1px;height:7px;background:#444"></div>
<div class="a" style="left:0;top:228px;width:1px;height:8px;background:#555"></div>
<div class="a" style="left:1975px;top:0;width:1px;height:1079px;background:#a9aaad"></div>
<div class="a" style="left:1976px;top:0;width:1px;height:1079px;background:#c8c9cc"></div>
<div class="a" style="left:1975px;top:0;width:2px;height:2px;background:#111"></div>
</div></body></html>
